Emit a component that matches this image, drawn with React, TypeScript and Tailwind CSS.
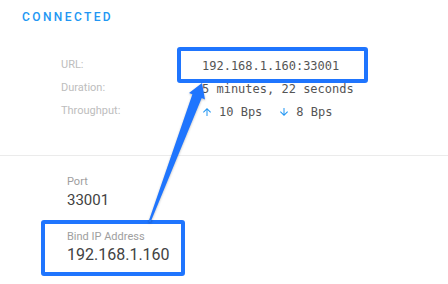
import React from "react";

const mono = "font-['DejaVu_Sans_Mono','Liberation_Mono',monospace]";

function ArrowIcon({ down = false }: { down?: boolean }) {
  return (
    <svg width="12" height="12" viewBox="0 0 24 24" className={down ? "rotate-180" : ""}>
      <path
        fill="#2196f3"
        d="M4 12l1.41 1.41L11 7.83V20h2V7.83l5.58 5.59L20 12l-8-8-8 8z"
      />
    </svg>
  );
}

export default function App() {
  return (
    <div className="relative w-[448px] h-[284px] overflow-hidden bg-white font-['Roboto','Liberation_Sans',sans-serif]">
      {/* Connection status */}
      <section className="h-[155px] pl-[22px] pt-[11px]">
        <div className="text-[12px] leading-[12px] font-medium tracking-[2.4px] text-[#2196f3]">
          CONNECTED
        </div>
        <div className="mt-[31px] ml-[39px] grid grid-cols-[141px_auto] auto-rows-[23px] items-center">
          <span className="text-[11px] text-[#bdbdbd]">URL:</span>
          <span className={`${mono} text-[12px] text-[#555]`}>192.168.1.160:33001</span>
          <span className="text-[11px] text-[#bdbdbd]">Duration:</span>
          <span className={`${mono} text-[12px] text-[#555]`}>5 minutes, 22 seconds</span>
          <span className="text-[11px] text-[#bdbdbd]">Throughput:</span>
          <div className={`${mono} flex items-center text-[12px] text-[#555]`}>
            <span className="-ml-[1px] flex items-center gap-[6px]">
              <ArrowIcon />
              10 Bps
            </span>
            <span className="ml-[16px] flex items-center gap-[6px]">
              <ArrowIcon down />
              8 Bps
            </span>
          </div>
        </div>
      </section>

      <div className="border-t border-[#ebebeb]" />

      {/* Settings */}
      <section className="pl-[67px] pt-[18px]">
        <div className="text-[11px] leading-[16px] text-[#9e9e9e]">Port</div>
        <div className="text-[15px] leading-[20px] text-[#424242]">33001</div>
        <div className="mt-[19px] text-[11px] leading-[16px] text-[#9e9e9e]">Bind IP Address</div>
        <div className="text-[16px] leading-[20px] text-[#424242]">192.168.1.160</div>
      </section>

      {/* Annotations */}
      <div className="absolute left-[177px] top-[47px] w-[191px] h-[36px] rounded-[3px] border-4 border-[#1f75fe]" />
      <div className="absolute left-[41px] top-[220px] w-[144px] h-[56px] rounded-[3px] border-4 border-[#1f75fe]" />
      <svg className="absolute left-0 top-0" width="448" height="284" viewBox="0 0 448 284">
        <polygon
          fill="#1f75fe"
          points="202,83 205,99.5 201.7,97.9 150.4,222.4 148.6,221.6 192.4,94.3 189,93"
          style={{ filter: "drop-shadow(0 1px 1px rgba(0,0,0,0.25))" }}
        />
      </svg>
    </div>
  );
}
